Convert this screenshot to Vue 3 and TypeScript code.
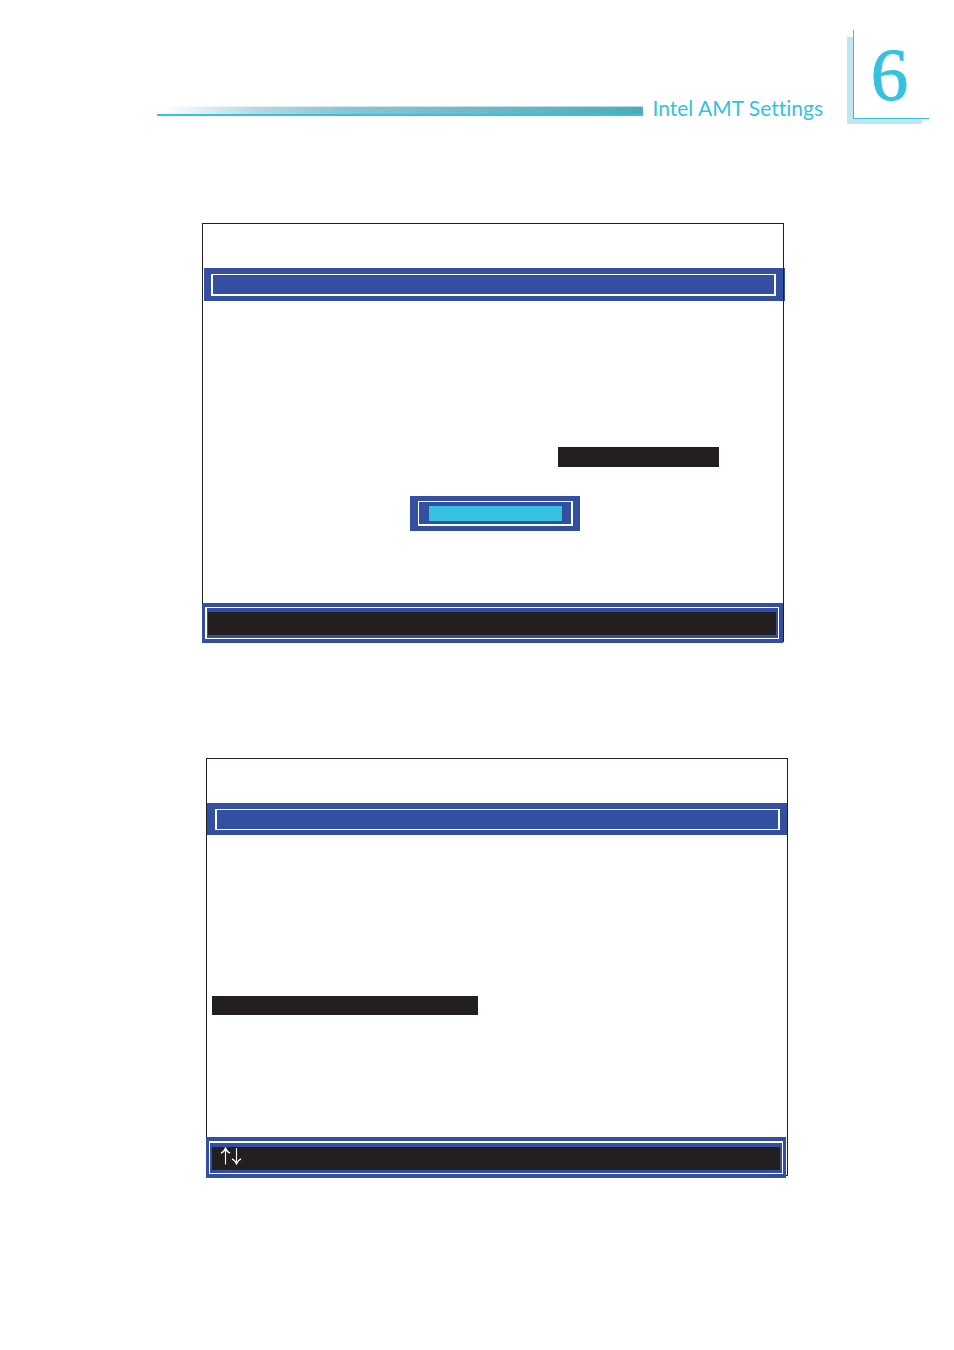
<script setup lang="ts">
interface Screen {
  id: string
  variant: 'password' | 'menu'
  arrows: boolean
}

const chapter = { number: '6', title: 'Intel AMT Settings' }

const screens: Screen[] = [
  { id: 'screen-password', variant: 'password', arrows: false },
  { id: 'screen-menu', variant: 'menu', arrows: true },
]
</script>

<template>
  <div class="page">
    <header class="header">
      <div class="rule"></div>
      <h1 class="title">{{ chapter.title }}</h1>
      <div class="badge">
        <div class="badge-face">{{ chapter.number }}</div>
      </div>
    </header>

    <main class="screens">
      <section v-for="screen in screens" :key="screen.id" class="screen" :class="screen.variant">
        <div class="bar"><div class="bar-frame"></div></div>
        <div class="body">
          <div class="selected"></div>
          <div v-if="screen.variant === 'password'" class="dialog">
            <div class="dialog-frame"><div class="field"></div></div>
          </div>
        </div>
        <footer class="keys">
          <div class="keys-frame">
            <div class="keys-text">
              <svg v-if="screen.arrows" class="arrows" viewBox="0 0 22 18" aria-hidden="true">
                <path d="M5.5 17.5V2M16.5 1V16" stroke-width="1.1" />
                <path d="M1 6.2Q4.2 4.6 5.5 1.4Q6.8 4.6 10 6.2M12 11.8Q15.2 13.4 16.5 16.6Q17.8 13.4 21 11.8" stroke-width="1.5" />
              </svg>
            </div>
          </div>
        </footer>
      </section>
    </main>
  </div>
</template>

<style>
body {
  margin: 0;
  background: #fff;
}
</style>

<style scoped>
.page {
  --cyan: #34c2de;
  --blue: #334fa2;
  --ink: #231f20;
  box-sizing: border-box;
  min-height: 1350px;
  padding: 30px 25px 172px 157px;
  background: #fff;
}
.page * {
  box-sizing: border-box;
}

.header {
  display: flex;
  align-items: flex-start;
}
.rule {
  flex: 1;
  height: 10px;
  margin-top: 76px;
  border-bottom: 2px solid var(--cyan);
  background:
    linear-gradient(rgba(255, 255, 255, 0.6), rgba(255, 255, 255, 0.6)) top / 100% 1px no-repeat,
    linear-gradient(90deg, #fff 1%, #b8d9e3 20%, #8dc5d2 38%, #78bbc7 60%, #4badba 100%);
}
.title {
  min-width: 168px;
  margin: 64px 24px 0 9px;
  color: var(--cyan);
  font: 400 21px/28px Lato, "Open Sans", sans-serif;
  font-variant-ligatures: none;
  white-space: nowrap;
}
.badge {
  width: 75px;
  height: 87px;
  margin: 7px 7px 0 0;
  background: #c0e6ef;
}
.badge-face {
  width: 76px;
  height: 89px;
  margin-left: 6px;
  position: relative;
  top: -7px;
  border-left: 1px solid var(--cyan);
  border-bottom: 1px solid var(--cyan);
  background: #fff;
  color: var(--cyan);
  font: 400 75px/90px "Liberation Serif", serif;
  -webkit-text-stroke: 1px var(--cyan);
  text-align: center;
  padding-right: 4px;
}

.screens {
  display: grid;
  gap: 116px;
  margin-top: 99px;
}
.screen {
  position: relative;
  display: flex;
  flex-direction: column;
  min-height: 419px;
  margin: 0 145px 0 45px;
  padding-top: 44px;
  border: 1px solid var(--ink);
}
.screen::after {
  content: "";
  position: absolute;
  inset: 0 -1px -1px auto;
  border-right: 1px solid var(--ink);
}
.bar {
  height: 33px;
  margin: 0 -2px 0 1px;
  padding: 6px 9px 5px 7px;
  background: var(--blue);
}
.bar-frame {
  height: 100%;
  border: 2px solid #fff;
  border-top-width: 1px;
}
.body {
  flex: 1;
}
.selected {
  width: 161px;
  height: 20px;
  margin: 146px 64px 0 auto;
  background: var(--ink);
}
.dialog {
  width: 170px;
  height: 35px;
  margin: 29px 0 0 207px;
  padding: 5px 7px 5px 8px;
  background: var(--blue);
}
.dialog-frame {
  height: 100%;
  padding: 4px 9px 3px 10px;
  border: solid #fff;
  border-width: 1px 2px 2px 1px;
}
.field {
  height: 15px;
  background: var(--cyan);
}
.keys {
  height: 40px;
  margin: 0 0 -2px -1px;
  padding: 4px 4px 4px 3px;
  background: var(--blue);
}
.keys-frame {
  height: 100%;
  padding: 4px 2px 3px 1px;
  border: 1px solid #fff;
  border-left-width: 2px;
}
.keys-text {
  height: 23px;
  padding-left: 8px;
  background: var(--ink);
}
.arrows {
  display: block;
  width: 22px;
  height: 18px;
  fill: none;
  stroke: #fff;
}

.menu {
  min-height: 418px;
  margin: 0 141px 0 49px;
}
.menu .bar {
  height: 32px;
  margin: 0;
  padding: 6px 7px 5px 8px;
}
.menu .bar-frame {
  border-width: 1px 2px;
}
.menu .selected {
  width: 266px;
  height: 19px;
  margin: 161px 0 0 5px;
}
.menu .keys {
  height: 41px;
  margin: 0 1px -3px -1px;
  padding: 4px 3px;
}
.menu .keys-frame {
  padding: 4px 2px 3px;
  border-width: 2px 1px 1px;
}
</style>
